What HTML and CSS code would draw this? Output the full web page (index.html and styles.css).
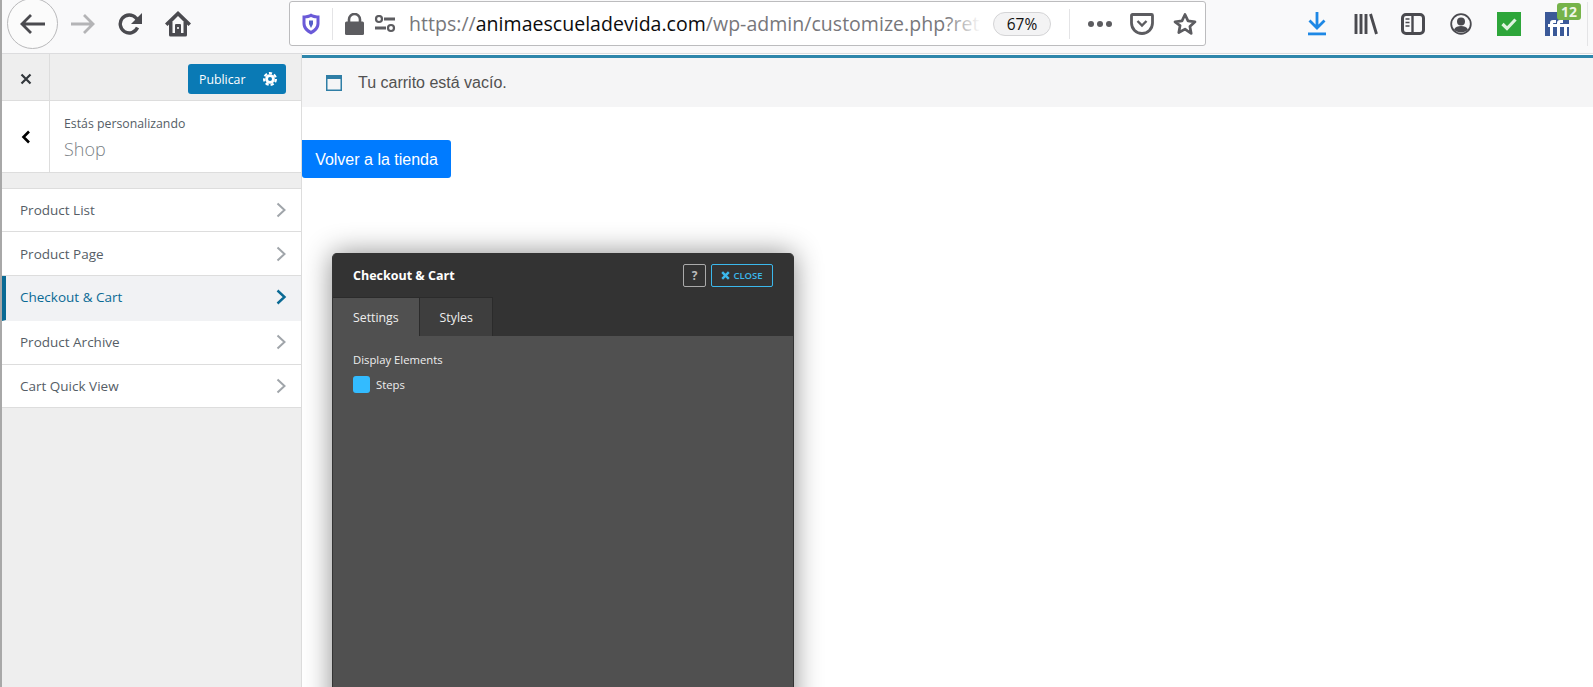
FILE: index.html
```html
<!DOCTYPE html>
<html lang="es">
<head>
<meta charset="utf-8">
<title>Customize: Shop</title>
<link rel="stylesheet" href="styles.css">
</head>
<body>
<div class="page">
  <header class="toolbar">
    <div class="back-circle">
      <svg class="ic" width="28" height="24" viewBox="0 0 28 24"><path d="M26 12H3M12 3l-9 9 9 9" fill="none" stroke="#4a4a4f" stroke-width="2.8"/></svg>
    </div>
    <svg class="forward" width="26" height="24" viewBox="0 0 26 24"><path d="M1 12h22M14 3l9 9-9 9" fill="none" stroke="#b4b4b6" stroke-width="2.8"/></svg>
    <svg class="reload" width="24" height="24" viewBox="0 0 24 24"><path d="M19.500 15.500a9 9 0 1 1-1.500-9.500L21 9" fill="none" stroke="#4a4a4f" stroke-width="3.400"/><path d="M24 1v11H13z" fill="#4a4a4f"/></svg>
    <svg class="home" width="26" height="26" viewBox="0 0 26 26"><path d="M13 0L0 12.500 2.500 15 4 13.600V24a1.500 1.500 0 0 0 1.500 1.500h15A1.500 1.500 0 0 0 22 24V13.600L23.500 15 26 12.500z" fill="#4a4a4f"/><path d="M13 5l5.500 5.500V22h-11V10.500z" fill="#f9f9fa"/><rect x="10" y="13" width="6" height="11" rx="1" fill="#4a4a4f"/><rect x="12.200" y="16" width="1.600" height="2" fill="#f9f9fa"/></svg>
    <div class="urlbar">
      <svg class="shield" width="20" height="24" viewBox="0 0 20 24"><path d="M1.500 3.500C5 3.500 7.500 3 10 1.500 12.500 3 15 3.500 18.500 3.500v8c0 5-3.500 8.500-8.500 11-5-2.500-8.500-6-8.500-11z" fill="#6a5ad8"/><path d="M4.500 6.300C6.500 6.200 8.500 5.800 10 5c1.500.8 3.500 1.200 5.500 1.300v5.200c0 3-2 5.200-5.500 7.300-3.500-2.100-5.500-4.300-5.500-7.300z" fill="#fff"/><path d="M8 8.500h4v3.500L10 16 8 12z" fill="#5560c8"/></svg>
      <span class="url-sep"></span>
      <svg class="lock" width="19" height="22" viewBox="0 0 19 22"><path d="M4 9V6.500a5.500 5.500 0 0 1 11 0V9" fill="none" stroke="#5c5c60" stroke-width="2.600"/><rect y="8.500" width="19" height="13.500" rx="1.500" fill="#5c5c60"/></svg>
      <svg class="perm" width="22" height="18" viewBox="0 0 22 18"><circle cx="5" cy="4" r="3" fill="none" stroke="#5c5c60" stroke-width="2.200"/><path d="M10 4h11M1 13h11" stroke="#5c5c60" stroke-width="2.800"/><circle cx="17" cy="13" r="3" fill="none" stroke="#5c5c60" stroke-width="2.200"/></svg>
      <div class="url"><span class="url-dim">https://</span><span class="url-host">animaescueladevida.com</span><span class="url-dim">/wp-admin/customize.php?ret</span></div>
      <span class="zoom-pill">67%</span>
      <span class="url-sep url-sep-right"></span>
      <span class="dots"><i></i><i></i><i></i></span>
      <svg class="pocket" width="24" height="22" viewBox="0 0 24 22"><path d="M2.500 1.500h19a1 1 0 0 1 1 1V10a10.500 10.500 0 0 1-21 0V2.500a1 1 0 0 1 1-1z" fill="none" stroke="#5c5c60" stroke-width="2.800"/><path d="M7.500 8l4.500 4.500L16.500 8" fill="none" stroke="#5c5c60" stroke-width="2.400"/></svg>
      <svg class="star" width="24" height="24" viewBox="0 0 24 24"><path d="M12 2.500l3 6.400 7 .9-5.100 4.800 1.300 6.900L12 17.100l-6.200 3.400 1.300-6.900L2 9.800l7-.9z" fill="none" stroke="#5c5c60" stroke-width="2.700" stroke-linejoin="round"/></svg>
    </div>
    <svg class="download" width="20" height="24" viewBox="0 0 20 24"><path d="M10 0v15M2.500 8.500L10 16l7.500-7.500" fill="none" stroke="#1e88e5" stroke-width="2.800"/><rect x="1" y="20.500" width="18" height="2.800" fill="#1e88e5"/></svg>
    <svg class="library" width="24" height="22" viewBox="0 0 24 22"><path d="M2 1v20M7 1v20M12 1v20M16.500 1l6 20" fill="none" stroke="#4a4a4f" stroke-width="2.900"/></svg>
    <svg class="sidebar-ic" width="24" height="22" viewBox="0 0 24 22"><rect x="1.500" y="1.500" width="21" height="19" rx="3.500" fill="none" stroke="#4a4a4f" stroke-width="3"/><path d="M11.500 1.500v19" stroke="#4a4a4f" stroke-width="2.400"/><path d="M4.500 6h4M4.500 9.500h4M4.500 13h4" stroke="#4a4a4f" stroke-width="1.500"/></svg>
    <svg class="account" width="22" height="22" viewBox="0 0 22 22"><circle cx="11" cy="11" r="9.800" fill="none" stroke="#4a4a4f" stroke-width="1.800"/><circle cx="11" cy="8.500" r="4" fill="#4a4a4f"/><path d="M4 16.500c1.500-3 4-3.500 7-3.500s5.500.5 7 3.500C16 18.800 13.500 19.500 11 19.500S6 18.800 4 16.500z" fill="#4a4a4f"/></svg>
    <div class="ext-check"><svg width="16" height="14" viewBox="0 0 16 14"><path d="M1.500 7l4.500 4.500L14.500 2.500" fill="none" stroke="#dff3df" stroke-width="3.200"/></svg></div>
    <div class="ext-fb">
      <svg width="24" height="24" viewBox="0 0 24 24"><rect width="24" height="24" fill="#3b5998"/><path d="M5 24V11c0-2 1-3 3-3h3v3H9c-.7 0-1 .3-1 1v12zM3 12h8v3H3zM12 24V11c0-2 1-3 3-3h3v3h-2c-.7 0-1 .3-1 1v12zM10 12h8v3h-8zM19 24V12h3v12zM18 12h6v3h-6z" fill="#fff"/></svg>
      <span class="badge">12</span>
    </div>
    <span class="tool-sep"></span>
  </header>

  <div class="workspace">
    <aside class="sidebar">
      <div class="side-top">
        <button class="side-close" type="button"><svg width="12" height="12" viewBox="0 0 12 12"><path d="M1.500 1.500l9 9M10.500 1.500l-9 9" stroke="#32373c" stroke-width="2.200"/></svg></button>
        <button class="publish" type="button"><span>Publicar</span><svg width="14" height="14" viewBox="0 0 14 14"><circle cx="7" cy="7" r="4.800" fill="#fff"/><circle cx="7" cy="7" r="5.900" fill="none" stroke="#fff" stroke-width="2.200" stroke-dasharray="3.200 2"/><circle cx="7" cy="7" r="2" fill="#0a7ab5"/></svg></button>
      </div>
      <div class="side-info">
        <div class="side-back"><svg width="10" height="14" viewBox="0 0 10 14"><path d="M8 1.500L2.500 7 8 12.500" fill="none" stroke="#000" stroke-width="2.600"/></svg></div>
        <div class="side-title">
          <span class="side-sub">Estás personalizando</span>
          <span class="side-name">Shop</span>
        </div>
      </div>
      <ul class="menu">
        <li class="menu-item">Product List<svg class="chev" width="11" height="16" viewBox="0 0 11 16"><path d="M1.500 1.500L8.500 8l-7 6.500" fill="none" stroke="currentColor" stroke-width="2"/></svg></li>
        <li class="menu-item">Product Page<svg class="chev" width="11" height="16" viewBox="0 0 11 16"><path d="M1.500 1.500L8.500 8l-7 6.500" fill="none" stroke="currentColor" stroke-width="2"/></svg></li>
        <li class="menu-item is-active">Checkout &amp; Cart<svg class="chev" width="11" height="16" viewBox="0 0 11 16"><path d="M1.500 1.500L8.500 8l-7 6.500" fill="none" stroke="currentColor" stroke-width="2.400"/></svg></li>
        <li class="menu-item">Product Archive<svg class="chev" width="11" height="16" viewBox="0 0 11 16"><path d="M1.500 1.500L8.500 8l-7 6.500" fill="none" stroke="currentColor" stroke-width="2"/></svg></li>
        <li class="menu-item">Cart Quick View<svg class="chev" width="11" height="16" viewBox="0 0 11 16"><path d="M1.500 1.500L8.500 8l-7 6.500" fill="none" stroke="currentColor" stroke-width="2"/></svg></li>
      </ul>
    </aside>

    <main class="preview">
      <div class="notice">
        <svg width="16" height="16" viewBox="0 0 16 16"><rect x=".75" y=".75" width="14.500" height="14.500" fill="#f5f5f6" stroke="#2f7ea6" stroke-width="1.500"/><rect width="16" height="4" fill="#2f7ea6"/></svg>
        <span>Tu carrito está vacío.</span>
      </div>
      <a class="shop-btn" href="#">Volver a la tienda</a>

      <section class="modal">
        <div class="modal-head">
          <h2 class="modal-title">Checkout &amp; Cart</h2>
          <button class="help" type="button">?</button>
          <button class="close" type="button"><svg width="9" height="9" viewBox="0 0 9 9"><path d="M1.200 1.200l6.600 6.600M7.800 1.200L1.200 7.800" stroke="#3bb8ec" stroke-width="2.400"/></svg>CLOSE</button>
        </div>
        <div class="tabs">
          <span class="tab tab-on">Settings</span>
          <span class="tab">Styles</span>
        </div>
        <div class="modal-body">
          <div class="field-label">Display Elements</div>
          <label class="check"><span class="box"></span>Steps</label>
        </div>
      </section>
    </main>
  </div>
  <span class="edge-mark"></span>
</div>
</body>
</html>
```

FILE: styles.css
```css
* { box-sizing: border-box; }
html, body { margin: 0; height: 100%; overflow: hidden; background: #fff; }
body { font-family: "Open Sans", sans-serif; }
.page { position: relative; height: 687px; display: flex; flex-direction: column; border-left: 2px solid #a8a8a8; overflow: hidden; }
.edge-mark { position: absolute; left: -2px; top: 72px; width: 2px; height: 36px; background: #222; }

/* browser toolbar */
.toolbar { flex: 0 0 54px; min-height: 0; display: flex; align-items: center; padding-bottom: 6px; background: #f9f9fa; border-bottom: 1px solid #dcdcde; }
.toolbar > svg, .urlbar > svg { flex: none; }
.back-circle { flex: none; width: 51px; height: 51px; margin-left: 5px; border: 1px solid #b9b9bb; border-radius: 50%; background: #fbfbfb; display: flex; align-items: center; justify-content: center; }
.forward { margin-left: 12px; }
.reload { margin-left: 22px; }
.home { margin-left: 23px; }
.urlbar { flex: none; width: 917px; height: 45px; margin-left: 98px; padding-left: 11px; background: #fff; border: 1px solid #bcbcbe; border-radius: 3px; display: flex; align-items: center; }
.url-sep { flex: none; width: 1px; height: 32px; background: #e4e4e6; margin-left: 11px; }
.lock { margin-left: 12px; }
.perm { margin-left: 10px; }
.url { flex: none; position: relative; width: 576px; margin-left: 13px; white-space: nowrap; font-size: 19.500px; line-height: 30px; letter-spacing: .03px; color: #77777b; overflow: hidden; }
.url::after { content: ""; position: absolute; right: 0; top: 0; bottom: 0; width: 40px; background: linear-gradient(to right, rgba(255,255,255,0), #fff 90%); }
.url-host { color: #0c0c0d; }
.zoom-pill { flex: none; margin-left: 8px; width: 58px; height: 24px; border: 1px solid #d4d4d6; border-radius: 12px; background: #f3f3f4; font-size: 15.500px; line-height: 22px; text-align: center; color: #111; }
.url-sep-right { margin-left: 18px; height: 30px; }
.dots { flex: none; display: flex; gap: 3px; margin-left: 18px; }
.dots i { width: 6px; height: 6px; border-radius: 50%; background: #5c5c60; }
.pocket { margin-left: 18px; }
.star { margin-left: 19px; }
.download { margin-left: 101px; }
.library { margin-left: 27px; }
.sidebar-ic { margin-left: 23px; }
.account { margin-left: 25px; }
.ext-check { flex: none; width: 24px; height: 24px; margin-left: 25px; background: #2ea63a; display: flex; align-items: center; justify-content: center; }
.ext-fb { flex: none; position: relative; width: 24px; height: 24px; margin-left: 24px; }
.ext-fb svg { display: block; }
.badge { position: absolute; left: 12px; top: -9px; width: 24px; height: 17px; border-radius: 3px; background: #76b34a; color: #eef6e6; font: bold 14px/17px "Open Sans", sans-serif; text-align: center; }
.tool-sep { flex: none; width: 1px; height: 44px; background: #e4e4e6; margin-left: 18px; }

/* workspace */
.workspace { flex: 1; min-height: 0; display: flex; }

.sidebar { flex: 0 0 300px; background: #eee; border-right: 1px solid #ddd; }
.side-top { height: 47px; display: flex; align-items: center; justify-content: space-between; padding-right: 15px; border-bottom: 1px solid #ddd; }
.side-close { width: 48px; height: 46px; padding: 4px 0 0; border: 0; border-right: 1px solid #ddd; background: transparent; display: flex; align-items: center; justify-content: center; }
.publish { width: 98px; height: 30px; margin-top: 4px; padding: 0 9px 0 11px; border: 0; border-radius: 3px; background: #0a7ab5; color: #fff; font: 12.300px "Open Sans", sans-serif; display: flex; align-items: center; justify-content: space-between; }
.side-info { height: 72px; display: flex; background: #fff; border-bottom: 1px solid #ddd; }
.side-back { flex: 0 0 48px; border-right: 1px solid #ddd; display: flex; align-items: center; justify-content: center; }
.side-title { display: flex; flex-direction: column; padding: 14px 0 0 14px; }
.side-sub { font-size: 12.300px; line-height: 17px; color: #555d66; }
.side-name { font-size: 18px; line-height: 26px; margin-top: 4px; color: #7a7f85; font-weight: 300; }

.menu { list-style: none; margin: 15px 0 0; padding: 0; background: #fff; border-top: 1px solid #ddd; }
.menu-item { height: 44px; padding: 0 14px 0 18px; display: flex; align-items: center; justify-content: space-between; border-bottom: 1px solid #ddd; font-size: 13.500px; font-weight: 500; color: #555d66; }
.menu-item:first-child, .menu-item:last-child { height: 43px; }
.menu-item .chev { color: #a0a5aa; }
.menu-item.is-active { height: 45px; padding-bottom: 2px; background: #f1f2f4; color: #0a6a94; border-left: 4px solid #0a6a94; padding-left: 14px; border-bottom-color: #f1f2f4; }
.menu-item.is-active .chev { color: #0a6a94; }
.is-active + .menu-item { padding-bottom: 2px; }

.preview { position: relative; flex: 1; min-width: 0; border-top: 3px solid #2e86ab; margin-top: 1px; background: #fff; }
.notice { height: 49px; padding: 1px 0 0 24px; display: flex; align-items: center; gap: 16px; background: #f5f5f6; font: 16px "Liberation Sans", sans-serif; color: #515151; }
.shop-btn { display: block; width: 149px; height: 38px; margin-top: 33px; border-radius: 0 3px 3px 3px; background: #007bff; color: #fff; font: 16px/39px "Liberation Sans", sans-serif; text-align: center; text-decoration: none; }

/* floating panel */
.modal { position: absolute; left: 30px; top: 195px; width: 462px; height: 520px; border-radius: 5px 5px 0 0; background: #505050; border: 1px solid #333; border-top: 0; box-shadow: 0 0 28px rgba(0,0,0,.45); }
.modal-head { height: 44px; padding: 1px 20px 0; display: flex; align-items: center; gap: 5px; background: #333; border-radius: 5px 5px 0 0; }
.modal-title { flex: 1; margin: 0; font-size: 12.500px; font-weight: 700; color: #fff; }
.help { width: 23px; height: 23px; padding: 0; border: 1px solid #aaa; border-radius: 2px; background: #333; color: #bbb; font: bold 12px "Open Sans", sans-serif; }
.close { width: 62px; height: 23px; padding: 0; border: 1px solid #3bb8ec; border-radius: 2px; background: #333; color: #3bb8ec; font: 600 9.500px "Open Sans", sans-serif; display: flex; align-items: center; justify-content: center; gap: 3px; }
.tabs { height: 39px; display: flex; background: #333; }
.tab { padding: 0 19px 0 20px; display: flex; align-items: center; font-size: 12.300px; color: #eee; background: #3e3e3e; border: 1px solid #2b2b2b; border-bottom: 0; border-left: 0; }
.tab-on { background: #505050; border-color: #2b2b2b; padding: 0 20px; }
.modal-body { padding: 14px 20px 0; color: #eee; font-size: 11.300px; }
.field-label { line-height: 20px; }
.check { margin-top: 6px; display: flex; align-items: center; gap: 6px; line-height: 16px; }
.box { width: 17px; height: 17px; border-radius: 3px; background: #33bbff; }
```
